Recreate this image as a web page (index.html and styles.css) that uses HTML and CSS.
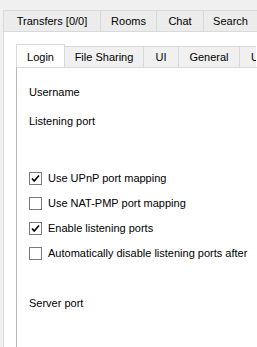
FILE: index.html
```html
<!DOCTYPE html>
<html>
<head>
<meta charset="utf-8">
<link rel="stylesheet" href="styles.css">
</head>
<body>
<div class="outer">
  <div class="tabbar">
    <div class="tab t-transfers">Transfers [0/0]</div>
    <div class="tab t-rooms">Rooms</div>
    <div class="tab t-chat">Chat</div>
    <div class="tab t-search">Search</div>
  </div>
  <div class="pane">
    <div class="inner">
      <div class="itabbar">
        <div class="itab sel t-login">Login</div>
        <div class="itab t-fs">File Sharing</div>
        <div class="itab t-ui">UI</div>
        <div class="itab t-gen">General</div>
        <div class="itab t-u">User</div>
      </div>
      <div class="ipane">
        <div class="label first">Username</div>
        <div class="label">Listening port</div>
        <div class="checks">
          <div class="check"><span class="box on"><svg viewBox="0 0 13 13" width="13" height="13"><path d="M3 6.5 L5.2 9 L10 3.5" fill="none" stroke="#000" stroke-width="1.6"/></svg></span><span>Use UPnP port mapping</span></div>
          <div class="check"><span class="box"></span><span>Use NAT-PMP port mapping</span></div>
          <div class="check"><span class="box on"><svg viewBox="0 0 13 13" width="13" height="13"><path d="M3 6.5 L5.2 9 L10 3.5" fill="none" stroke="#000" stroke-width="1.6"/></svg></span><span>Enable listening ports</span></div>
          <div class="check"><span class="box"></span><span>Automatically disable listening ports after</span></div>
        </div>
        <div class="label server">Server port</div>
      </div>
    </div>
  </div>
</div>
</body>
</html>
```
FILE: styles.css
```css
html, body {
  margin: 0;
  padding: 0;
  background: #f0f0f0;
  font-family: "Liberation Sans", Arial, sans-serif;
  font-size: 11px;
  color: #000;
  overflow: hidden;
  height: 347px;
}
.outer {
  padding: 10px 0 0 3px;
}
.tabbar {
  display: flex;
  height: 21px;
  white-space: nowrap;
}
.tab {
  box-sizing: border-box;
  height: 21px;
  border: 1px solid #d9d9d9;
  border-bottom: none;
  border-right: none;
  background: #ececec;
  display: flex;
  align-items: center;
  justify-content: center;
  flex: none;
}
.t-transfers { width: 97px; }
.t-rooms { width: 56px; }
.t-chat { width: 47px; }
.t-search { width: 54px; }
.pane {
  background: #ffffff;
  border-top: 1px solid #d9d9d9;
  border-left: 1px solid #d9d9d9;
  height: 320px;
}
.inner {
  padding: 12px 0 0 12px;
}
.itabbar {
  display: flex;
  height: 23px;
  align-items: flex-end;
  white-space: nowrap;
  position: relative;
  z-index: 1;
  overflow: hidden;
}
.itab {
  box-sizing: border-box;
  height: 21px;
  border: 1px solid #d9d9d9;
  border-bottom: none;
  border-right: none;
  background: #f0f0f0;
  display: flex;
  align-items: center;
  justify-content: center;
  flex: none;
}
.itab.sel {
  height: 24px;
  margin-bottom: -1px;
  background: #fff;
  border-color: #d9d9d9;
  border-right: 1px solid #d9d9d9;
  padding-top: 1px;
}
.t-login { width: 49px; }
.t-fs { width: 79px; margin-left: -1px; }
.t-ui { width: 35px; }
.t-gen { width: 61px; }
.t-u { width: 17px; justify-content: flex-start; padding-left: 11px; overflow: hidden; }
.ipane {
  background: #fff;
  border-top: 1px solid #d9d9d9;
  border-left: 1px solid #b9b9b9;
  height: 290px;
  padding-left: 12px;
}
.label {
  height: 13px;
  line-height: 13px;
  margin-top: 16px;
}
.label.first {
  margin-top: 18px;
}
.checks {
  margin-top: 44px;
  display: flex;
  flex-direction: column;
  gap: 12px;
}
.check {
  display: flex;
  align-items: center;
  height: 13px;
  line-height: 13px;
  white-space: nowrap;
}
.box {
  box-sizing: border-box;
  width: 13px;
  height: 13px;
  border: 1px solid #7a7a7a;
  background: #fff;
  margin-right: 6px;
  flex: none;
  position: relative;
}
.box svg {
  position: absolute;
  left: -1px;
  top: -1px;
}
.server {
  margin-top: 37px;
}
```
